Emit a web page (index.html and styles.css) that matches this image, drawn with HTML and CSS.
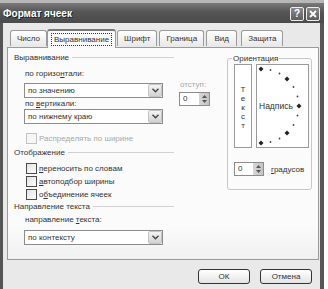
FILE: index.html
```html
<!DOCTYPE html>
<html lang="ru">
<head>
<meta charset="UTF-8" />
<title>Формат ячеек</title>
<link rel="stylesheet" href="styles.css">
</head>
<body>

<div class="window">
  <div class="titlebar">
    <span class="title">Формат ячеек</span>
    <div class="title-buttons">
      <span class="tbtn">?</span>
      <span class="tbtn">
        <svg width="8" height="8" viewBox="0 0 8 8"><path d="M1 1 L7 7 M7 1 L1 7" stroke="#fff" stroke-width="1.8"/></svg>
      </span>
    </div>
  </div>

  <div class="frame">
    <div class="tabs">
      <div class="tab">Число</div>
      <div class="tab tab-active"><span class="focus">Выравнивание</span></div>
      <div class="tab">Шрифт</div>
      <div class="tab">Граница</div>
      <div class="tab tab-wide">Вид</div>
      <div class="tab">Защита</div>
    </div>

    <div class="panel">
      <div class="left">
        <div class="legend">Выравнивание</div>

        <div class="align-grid">
          <div class="combos">
            <div class="label label-first">по горизо<u>н</u>тали:</div>
            <div class="combo"><span class="combo-text">по значению</span><span class="drop"><svg width="7" height="5" viewBox="0 0 7 5"><path d="M0.5 0.8 L3.5 3.8 L6.5 0.8" fill="none" stroke="#444" stroke-width="1.4"/></svg></span></div>
            <div class="label">по <u>в</u>ертикали:</div>
            <div class="combo"><span class="combo-text">по нижнему краю</span><span class="drop"><svg width="7" height="5" viewBox="0 0 7 5"><path d="M0.5 0.8 L3.5 3.8 L6.5 0.8" fill="none" stroke="#444" stroke-width="1.4"/></svg></span></div>
          </div>
          <div class="indent">
            <div class="label disabled">отступ:</div>
            <div class="spin">
              <span class="spin-text">0</span>
              <span class="spin-btns">
                <svg width="5" height="3" viewBox="0 0 5 3"><path d="M0 3 L2.5 0 L5 3Z" fill="#555"/></svg>
                <svg width="5" height="3" viewBox="0 0 5 3"><path d="M0 0 L2.5 3 L5 0Z" fill="#555"/></svg>
              </span>
            </div>
          </div>
        </div>

        <div class="check check-distribute disabled"><span class="box box-disabled"></span><span>Распределять по ширине</span></div>

        <div class="legend">Отображение</div>
        <div class="check check-first"><span class="box"></span><span><u>п</u>ереносить по словам</span></div>
        <div class="check"><span class="box"></span><span><u>а</u>втоподбор ширины</span></div>
        <div class="check"><span class="box"></span><span>о<u>б</u>ъединение ячеек</span></div>

        <div class="legend">Направление текста</div>
        <div class="label label-dir">направление <u>т</u>екста:</div>
        <div class="combo"><span class="combo-text">по контексту</span><span class="drop"><svg width="7" height="5" viewBox="0 0 7 5"><path d="M0.5 0.8 L3.5 3.8 L6.5 0.8" fill="none" stroke="#444" stroke-width="1.4"/></svg></span></div>
      </div>

      <div class="orient">
        <span class="orient-title">Ориентация</span>
        <div class="orient-boxes">
          <div class="vtext">
            <span>Т</span><span>е</span><span>к</span><span>с</span><span>т</span>
          </div>
          <div class="dial">
            <svg width="51" height="82" viewBox="0 0 51 82">
              <g fill="#222">
                <polygon points="4,1.5 6.5,4 4,6.5 1.5,4"/>
                <polygon points="30,11.5 32.5,14 30,16.5 27.5,14"/>
                <polygon points="42,38.5 44.5,41 42,43.5 39.5,41"/>
                <polygon points="30,65.5 32.5,68 30,70.5 27.5,68"/>
                <polygon points="4,75.5 6.5,78 4,80.5 1.5,78"/>
              </g>
              <g fill="#444">
                <circle cx="13.5" cy="5" r="0.9"/>
                <circle cx="22.5" cy="8.5" r="0.9"/>
                <circle cx="36.5" cy="22" r="0.9"/>
                <circle cx="40.5" cy="31.5" r="0.9"/>
                <circle cx="40.5" cy="50.5" r="0.9"/>
                <circle cx="36.5" cy="60" r="0.9"/>
                <circle cx="22.5" cy="73.5" r="0.9"/>
                <circle cx="13.5" cy="77" r="0.9"/>
              </g>
              <text x="2" y="44" class="dial-text">Надпись</text>
            </svg>
          </div>
        </div>
        <div class="degrees">
          <div class="spin spin-deg">
            <span class="spin-text">0</span>
            <span class="spin-btns">
              <svg width="5" height="3" viewBox="0 0 5 3"><path d="M0 3 L2.5 0 L5 3Z" fill="#555"/></svg>
              <svg width="5" height="3" viewBox="0 0 5 3"><path d="M0 0 L2.5 3 L5 0Z" fill="#555"/></svg>
            </span>
          </div>
          <span class="label"><u>г</u>радусов</span>
        </div>
      </div>
    </div>

    <div class="buttons">
      <button class="btn">ОК</button>
      <button class="btn">Отмена</button>
    </div>
  </div>
</div>

</body>
</html>
```

FILE: styles.css
```css
body {
  margin: 0;
  background: #fff;
  font-family: "Liberation Sans", Arial, sans-serif;
  font-size: 8px;
  color: #333;
}
u {
  text-decoration-thickness: 1px;
  text-underline-offset: 1px;
}
.window {
  width: 324px;
  height: 289px;
  display: flex;
  flex-direction: column;
}

/* Заголовок окна */
.titlebar {
  height: 23px;
  box-sizing: border-box;
  border-top: 3px solid #b8b8b8;
  background: linear-gradient(#7a7a7a, #555 45%, #4b4b4b);
  display: flex;
  align-items: center;
  justify-content: space-between;
  padding: 0 4px 0 3px;
}
.title {
  color: #fff;
  font-weight: bold;
  font-size: 10px;
  text-shadow: 1px 1px 0 #222;
}
.title-buttons {
  display: flex;
  gap: 2px;
  margin-top: 1px;
}
.tbtn {
  width: 14px;
  height: 14px;
  box-sizing: border-box;
  border: 1px solid #eee;
  border-radius: 2px;
  background: linear-gradient(#8a8a8a, #5d5d5d);
  color: #fff;
  font-weight: bold;
  font-size: 10px;
  display: flex;
  align-items: center;
  justify-content: center;
}

/* Рамка окна */
.frame {
  flex: 1;
  border-left: 3px solid #555;
  border-right: 4px solid #555;
  background: #e9e9e9;
  padding-left: 4px;
  display: flex;
  flex-direction: column;
}
.tabs {
  display: flex;
  align-items: flex-end;
  gap: 2px;
  height: 18px;
  margin-top: 6px;
  padding-left: 3px;
}
.tab {
  height: 16px;
  box-sizing: border-box;
  padding: 0 6px;
  border: 1px solid #9a9a9a;
  border-bottom: none;
  border-radius: 3px 3px 0 0;
  background: linear-gradient(#fff, #e8e8e8);
  display: flex;
  align-items: center;
  justify-content: center;
  margin-bottom: 1px;
}
.tab-wide {
  min-width: 31px;
  margin-right: 2px;
}
.tab-active {
  height: 19px;
  margin: 0 -1px -1px -2px;
  padding: 0 3px;
  border-top: 2px solid #777;
  background: #f9f9f9;
  position: relative;
  z-index: 1;
}
.focus {
  border: 1px dotted #333;
  padding: 1px 2px;
  line-height: 9px;
}

.panel {
  width: 312px;
  height: 213px;
  box-sizing: border-box;
  border: 1px solid #9a9a9a;
  background: linear-gradient(#fbfbfb 85%, #f0f0f0);
  padding: 4px 0 0 6px;
  display: grid;
  grid-template-columns: 213px 85px;
  align-items: start;
}
.left {
  display: flex;
  flex-direction: column;
}
.legend {
  height: 11px;
  line-height: 11px;
  width: 160px;
  display: flex;
  align-items: center;
  gap: 3px;
}
.legend::after {
  content: "";
  flex: 1;
  height: 1px;
  background: #d2d2d2;
}
.label {
  height: 11px;
  line-height: 11px;
  padding-left: 1px;
}
.disabled {
  color: #a8a8a8;
}
.align-grid {
  display: grid;
  grid-template-columns: 139px 31px;
  column-gap: 16px;
  margin-left: 10px;
}
.label-first {
  margin-top: 5px;
  margin-bottom: 4px;
}
.combo {
  width: 139px;
  height: 15px;
  box-sizing: border-box;
  border: 1px solid #8c8c8c;
  background: #fff;
  display: flex;
  align-items: center;
  justify-content: space-between;
  padding-left: 3px;
}
.left > .combo {
  margin-left: 10px;
  margin-top: 5px;
}
.drop {
  width: 14px;
  height: 13px;
  box-sizing: border-box;
  border: 1px solid #c4c4c4;
  border-radius: 2px;
  background: linear-gradient(#f4f4f4, #d2d2d2);
  display: flex;
  align-items: center;
  justify-content: center;
}
.indent {
  padding-top: 16px;
}
.spin {
  width: 31px;
  height: 14px;
  box-sizing: border-box;
  border: 1px solid #8c8c8c;
  background: #fff;
  display: flex;
  justify-content: space-between;
  margin-top: 2px;
}
.spin-text {
  padding-left: 3px;
  line-height: 12px;
}
.spin-btns {
  width: 10px;
  background: linear-gradient(90deg, #d6d6d6, #c4c4c4);
  display: flex;
  flex-direction: column;
  align-items: center;
  justify-content: space-around;
  padding: 1px 0;
}

/* Флажки */
.check {
  height: 13px;
  display: flex;
  align-items: center;
  gap: 2px;
  margin-left: 12px;
}
.check-distribute {
  margin-top: 8px;
  margin-bottom: 2px;
}
.check-first {
  margin-top: 4px;
}
.box {
  width: 11px;
  height: 11px;
  box-sizing: border-box;
  border: 1px solid #4a4a4a;
  background: linear-gradient(135deg, #e2e2e2, #fdfdfd);
}
.box-disabled {
  border-color: #c2c2c2;
  background: #f6f6f6;
}
.label-dir {
  margin-top: 2px;
  margin-left: 10px;
}

/* Ориентация */
.orient {
  margin-top: 6px;
  height: 132px;
  box-sizing: border-box;
  border: 1px solid #c8c8c8;
  border-radius: 3px;
  padding: 0 0 0 6px;
  display: flex;
  flex-direction: column;
}
.orient-title {
  align-self: flex-start;
  margin: -6px 0 0 -2px;
  padding: 0 1px;
  height: 11px;
  line-height: 11px;
  background: #fbfbfb;
}
.orient-boxes {
  display: flex;
  gap: 4px;
}
.vtext {
  width: 18px;
  height: 84px;
  box-sizing: border-box;
  border: 1px solid #9a9a9a;
  background: #fff;
  display: flex;
  flex-direction: column;
  align-items: center;
  justify-content: center;
  line-height: 9px;
  padding-top: 2px;
}
.dial {
  width: 53px;
  height: 84px;
  box-sizing: border-box;
  border: 1px solid #9a9a9a;
  background: #fff;
  display: flex;
}
.dial-text {
  font-family: "Liberation Sans", Arial, sans-serif;
  font-size: 8.5px;
  fill: #333;
}
.degrees {
  display: flex;
  align-items: center;
  gap: 6px;
  margin-top: 14px;
}
.spin-deg {
  margin-top: 0;
  width: 30px;
}

/* Кнопки */
.buttons {
  display: flex;
  justify-content: flex-end;
  gap: 10px;
  width: 305px;
  margin-top: 9px;
}
.btn {
  width: 52px;
  height: 15px;
  padding: 0;
  border: 1px solid #333;
  border-radius: 3px;
  background: linear-gradient(#fff, #e4e4e4);
  font-family: "Liberation Sans", Arial, sans-serif;
  font-size: 8px;
  color: #333;
}
```
